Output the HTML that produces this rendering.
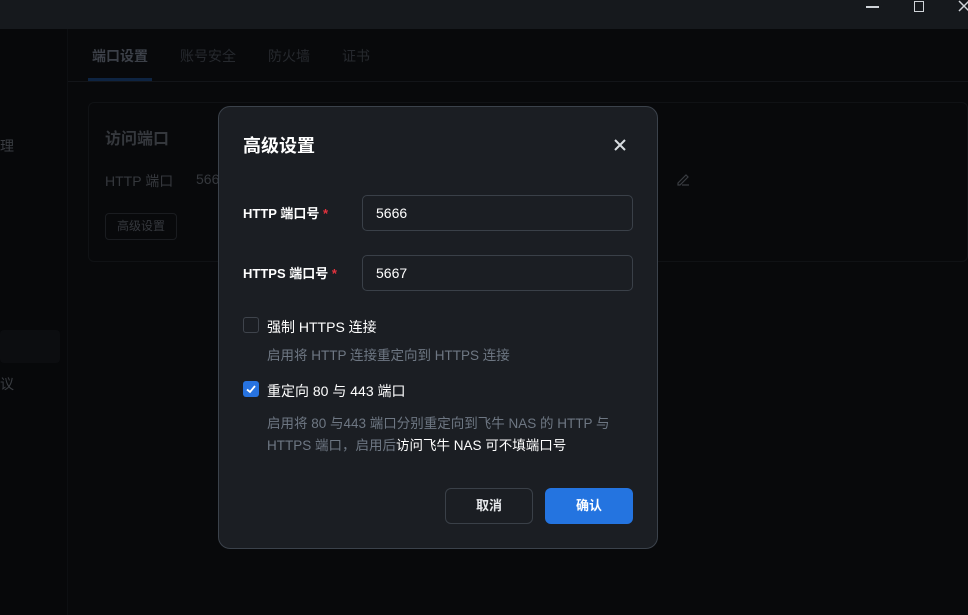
<!DOCTYPE html>
<html><head><meta charset="utf-8"><style>
*{margin:0;padding:0;box-sizing:border-box}
body{width:968px;height:615px;overflow:hidden;background:#08090b;font-family:"Liberation Sans","Noto Sans CJK SC",sans-serif;position:relative;color:#fff}
.abs{position:absolute}
.top{left:0;top:0;width:968px;height:29px;background:#16191d}
.side{left:0;top:29px;width:68px;height:586px;background:#07080a;border-right:1px solid #0d0f12}
.t{font-size:14px;white-space:nowrap}
</style></head><body>
<div class="abs top"></div>
<div class="abs side"></div>
<div class="abs" style="left:866px;top:6px;width:13px;height:1.5px;background:#cfd3d8"></div>
<div class="abs" style="left:914px;top:1px;width:10px;height:11px;border:1.5px solid #cfd3d8"></div>
<svg class="abs" style="left:958px;top:0" width="10" height="12"><path d="M1 1L11 11M11 1L1 11" stroke="#cfd3d8" stroke-width="1.5"/></svg>
<div class="abs t" style="left:92px;top:46px;color:#3c4048;font-weight:bold">端口设置</div>
<div class="abs t" style="left:180px;top:46px;color:#26292e">账号安全</div>
<div class="abs t" style="left:268px;top:46px;color:#26292e">防火墙</div>
<div class="abs t" style="left:342px;top:46px;color:#26292e">证书</div>
<div class="abs" style="left:88px;top:78px;width:64px;height:3px;background:#0e2442"></div>
<div class="abs" style="left:68px;top:81px;width:900px;height:1px;background:#131519"></div>
<div class="abs t" style="left:0;top:136px;color:#3a3d42">理</div>
<div class="abs" style="left:0;top:330px;width:60px;height:33px;background:#0c0d10;border-radius:4px"></div>
<div class="abs t" style="left:0;top:374px;color:#3a3d42">议</div>
<div class="abs" style="left:88px;top:102px;width:880px;height:160px;border:1px solid #101215;border-radius:6px;background:#08090b"></div>
<div class="abs" style="left:105px;top:125px;font-size:16px;color:#35383d;font-weight:bold">访问端口</div>
<div class="abs t" style="left:105px;top:171px;color:#35383d">HTTP 端口</div>
<div class="abs t" style="left:196px;top:171px;color:#35383d">566</div>
<div class="abs" style="left:105px;top:213px;width:72px;height:27px;border:1px solid #1a1c20;border-radius:4px;font-size:12px;color:#35383d;text-align:center;line-height:25px">高级设置</div>
<svg class="abs" style="left:676px;top:172px" width="14" height="14"><path d="M2 11L10 3L12 5L4 13H2Z M6 13H13" stroke="#3a3d42" stroke-width="1.2" fill="none"/></svg>
<div class="abs" style="left:218px;top:106px;width:440px;height:443px;background:#1b1e23;border:1px solid #3b424b;border-radius:12px"></div>
<div class="abs" style="left:243px;top:132px;font-size:18px;font-weight:bold">高级设置</div>
<svg class="abs" style="left:613px;top:138px" width="14" height="14"><path d="M2 2L12 12M12 2L2 12" stroke="#d8dce0" stroke-width="2"/></svg>
<div class="abs t" style="left:243px;top:203px;font-size:13px;font-weight:bold">HTTP 端口号 <span style="color:#e5323e">*</span></div>
<div class="abs" style="left:362px;top:195px;width:271px;height:36px;border:1px solid #3a4048;border-radius:5px;background:#1b1e23;padding-left:13px;line-height:34px;font-size:14px">5666</div>
<div class="abs t" style="left:243px;top:263px;font-size:13px;font-weight:bold">HTTPS 端口号 <span style="color:#e5323e">*</span></div>
<div class="abs" style="left:362px;top:255px;width:271px;height:36px;border:1px solid #3a4048;border-radius:5px;background:#1b1e23;padding-left:13px;line-height:34px;font-size:14px">5667</div>
<div class="abs" style="left:243px;top:317px;width:16px;height:16px;border:1px solid #3f444c;border-radius:3px"></div>
<div class="abs t" style="left:267px;top:317px">强制 HTTPS 连接</div>
<div class="abs t" style="left:267px;top:344px;color:#6e7783;font-size:13.5px">启用将 HTTP 连接重定向到 HTTPS 连接</div>
<div class="abs" style="left:243px;top:381px;width:16px;height:16px;background:#2773e0;border-radius:3px"></div>
<svg class="abs" style="left:243px;top:381px" width="16" height="16"><path d="M4 8.5L7 11L12 5" stroke="#fff" stroke-width="1.8" fill="none"/></svg>
<div class="abs t" style="left:267px;top:381px">重定向 80 与 443 端口</div>
<div class="abs" style="left:267px;top:413px;width:360px;font-size:13.5px;line-height:22px;color:#6e7783">启用将 80 与443 端口分别重定向到飞牛 NAS 的 HTTP 与<br>HTTPS 端口，启用后<span style="color:#fff">访问飞牛 NAS 可不填端口号</span></div>
<div class="abs" style="left:445px;top:488px;width:88px;height:36px;border:1px solid #3a4048;border-radius:6px;text-align:center;line-height:34px;font-size:13px;font-weight:bold;color:#e6e8eb">取消</div>
<div class="abs" style="left:545px;top:488px;width:88px;height:36px;background:#2474e0;border-radius:6px;text-align:center;line-height:36px;font-size:13px;font-weight:bold">确认</div>
</body></html>
